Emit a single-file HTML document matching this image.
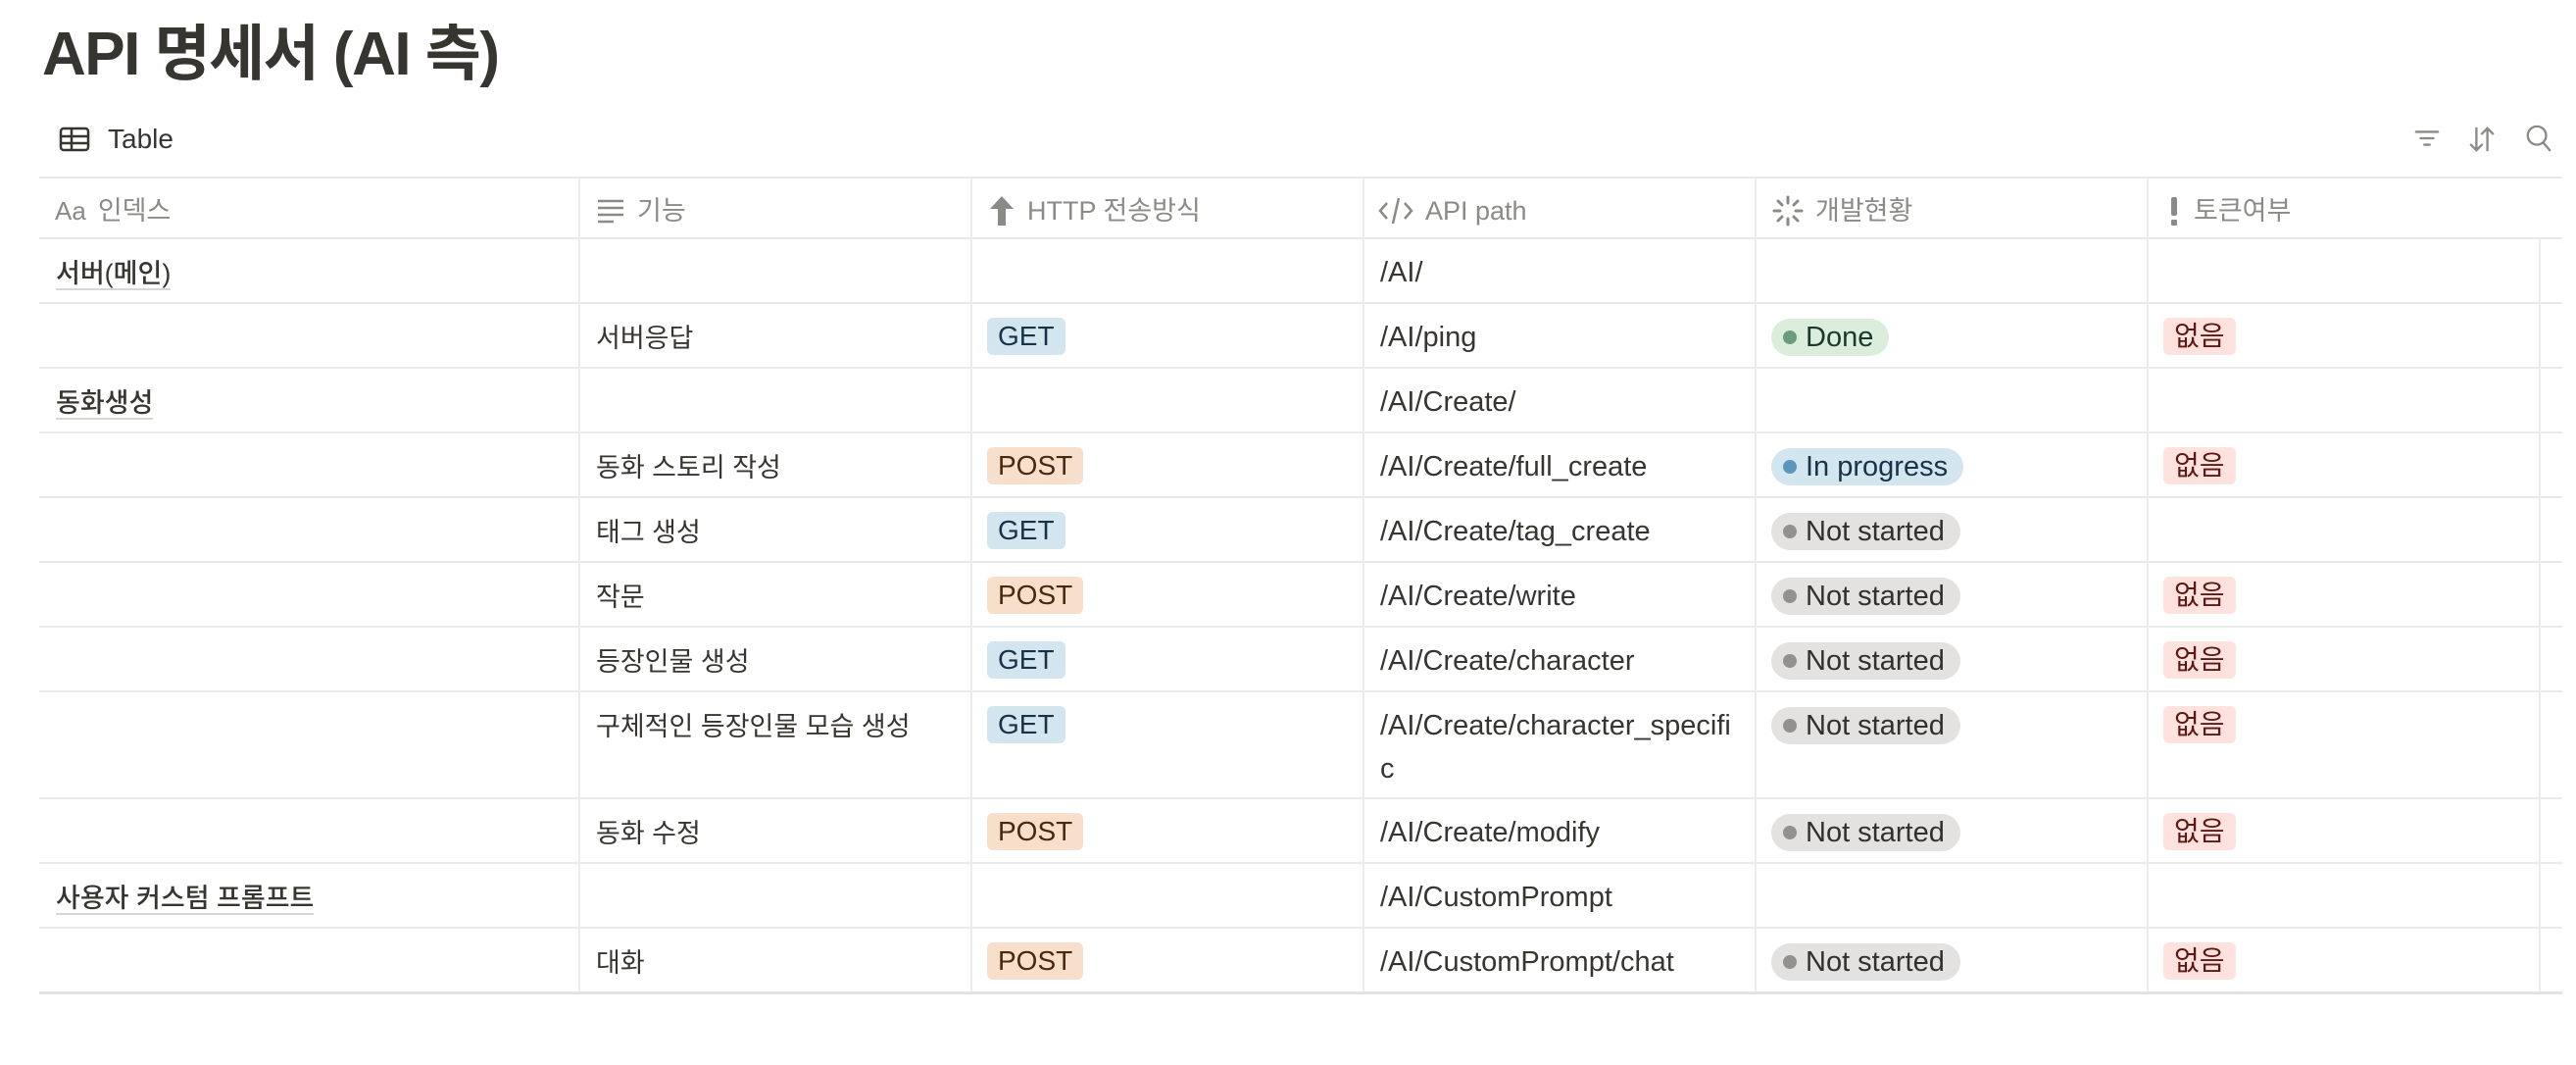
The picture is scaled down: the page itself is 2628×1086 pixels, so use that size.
<!DOCTYPE html>
<html><head><meta charset="utf-8"><style>
*{box-sizing:border-box;margin:0;padding:0}
body{width:2628px;height:1086px;background:#fff;font-family:"Liberation Sans","Noto Sans CJK KR",sans-serif;color:#37352f;position:relative;overflow:hidden}
.title{position:absolute;left:43px;top:4px;font-size:62px;font-weight:700;letter-spacing:-1.5px}
.tb{position:absolute;left:60px;top:126px;font-size:28px;font-weight:500;display:flex;align-items:center;gap:18px}
.tools{position:absolute;top:126px;}
.hline{position:absolute;left:40px;width:2574px;height:2px;background:#e9e9e7}
.vline{position:absolute;width:2px;background:#ececea}
.cell{position:absolute;font-size:27px;line-height:40px;white-space:nowrap}
.lat{font-size:29px}
.hd{position:absolute;top:193px;font-size:27px;color:#8b8a86;display:flex;align-items:center;gap:12px;line-height:44px}
.pill{display:inline-block;height:38px;line-height:38px;padding:0 11px;border-radius:6px;font-size:28px}
.get{background:#d3e5ef;color:#183347}
.post{background:#f8dfcc;color:#49290e}
.no{background:#ffe2dd;color:#5d1715}
.st{display:inline-flex;align-items:center;height:38px;padding:0 16px 0 12px;border-radius:19px;font-size:29px;gap:9px}
.st i{width:14px;height:14px;border-radius:50%;display:inline-block}
.done{background:#dbeddb;color:#1c3829}.done i{background:#6c9b7d}
.prog{background:#d3e5ef;color:#183347}.prog i{background:#5b97bd}
.ns{background:#e3e2e0;color:#32302c}.ns i{background:#91918e}
.u{border-bottom:2px solid #d7d6d3;font-weight:500}
</style></head><body>
<div class="title">API 명세서 (AI 측)</div>
<div class="tb"><svg width="32" height="28" viewBox="0 0 32 28"><rect x="2" y="3" width="28" height="22" rx="3" fill="none" stroke="#37352f" stroke-width="2.5"/><line x1="2" y1="11" x2="30" y2="11" stroke="#37352f" stroke-width="2.5"/><line x1="2" y1="18" x2="30" y2="18" stroke="#37352f" stroke-width="2.5"/><line x1="13" y1="3" x2="13" y2="25" stroke="#37352f" stroke-width="2.5"/></svg>Table</div>
<svg class="tools" style="left:2462px" width="28" height="30" viewBox="0 0 30 30"><g stroke="#8b8a86" stroke-width="2.5" stroke-linecap="round"><line x1="3" y1="8" x2="27" y2="8"/><line x1="8" y1="15" x2="22" y2="15"/><line x1="12" y1="22" x2="18" y2="22"/></g></svg>
<svg class="tools" style="left:2518px" width="28" height="32" viewBox="0 0 30 32"><g stroke="#8b8a86" stroke-width="2.5" fill="none" stroke-linecap="round"><path d="M9 4v24M3 22l6 6 6-6"/><path d="M21 28V4M15 10l6-6 6 6"/></g></svg>
<svg class="tools" style="left:2576px" width="28" height="30" viewBox="0 0 30 32"><g stroke="#8b8a86" stroke-width="2.5" fill="none"><circle cx="13" cy="13" r="10"/><line x1="20" y1="21" x2="27" y2="29" stroke-linecap="round"/></g></svg>

<div class="hline" style="top:180px"></div>
<div class="hline" style="top:242px"></div>
<div class="hline" style="top:308px"></div>
<div class="hline" style="top:374px"></div>
<div class="hline" style="top:440px"></div>
<div class="hline" style="top:506px"></div>
<div class="hline" style="top:572px"></div>
<div class="hline" style="top:638px"></div>
<div class="hline" style="top:704px"></div>
<div class="hline" style="top:813px"></div>
<div class="hline" style="top:879px"></div>
<div class="hline" style="top:945px"></div>
<div class="hline" style="top:1011px;height:3px;background:#e3e3e1"></div>
<div class="vline" style="left:590px;top:181px;height:831px"></div>
<div class="vline" style="left:990px;top:181px;height:831px"></div>
<div class="vline" style="left:1390px;top:181px;height:831px"></div>
<div class="vline" style="left:1790px;top:181px;height:831px"></div>
<div class="vline" style="left:2190px;top:181px;height:831px"></div>
<div class="vline" style="left:2590px;top:243px;height:769px"></div>

<div class="hd" style="left:56px"><span style="font-size:26px">Aa</span>인덱스</div>
<div class="hd" style="left:608px"><svg width="30" height="26" viewBox="0 0 30 26"><g stroke="#8b8a86" stroke-width="2.5"><line x1="2" y1="3" x2="28" y2="3"/><line x1="2" y1="10" x2="28" y2="10"/><line x1="2" y1="17" x2="28" y2="17"/><line x1="2" y1="24" x2="18" y2="24"/></g></svg>기능</div>
<div class="hd" style="left:1008px"><svg width="28" height="32" viewBox="0 0 28 32"><path d="M14 1L26 14H18V31H10V14H2Z" fill="#8b8a86"/></svg>HTTP 전송방식</div>
<div class="hd" style="left:1406px"><svg width="36" height="30" viewBox="0 0 36 30"><g stroke="#8b8a86" stroke-width="2.5" fill="none"><path d="M9 7L2 15l7 8M27 7l7 8-7 8M21 2L15 28"/></g></svg>API path</div>
<div class="hd" style="left:1808px"><svg width="32" height="32" viewBox="0 0 32 32"><g stroke="#8b8a86" stroke-width="3" stroke-linecap="round"><line x1="16" y1="2" x2="16" y2="8"/><line x1="16" y1="24" x2="16" y2="30"/><line x1="2" y1="16" x2="8" y2="16"/><line x1="24" y1="16" x2="30" y2="16"/><line x1="6" y1="6" x2="10" y2="10"/><line x1="22" y1="22" x2="26" y2="26"/><line x1="26" y1="6" x2="22" y2="10"/><line x1="6" y1="26" x2="10" y2="22"/></g></svg>개발현황</div>
<div class="hd" style="left:2210px"><svg width="16" height="32" viewBox="0 0 16 32"><rect x="5" y="2" width="6" height="19" rx="2" fill="#8b8a86"/><rect x="5" y="25" width="6" height="6" rx="1" fill="#8b8a86"/></svg>토큰여부</div>

<div class="cell" style="left:57px;top:259px"><span class="u">서버(메인)</span></div>
<div class="cell lat" style="left:1408px;top:258px">/AI/</div>

<div class="cell" style="left:608px;top:325px">서버응답</div>
<div class="cell" style="left:1007px;top:323px"><span class="pill get">GET</span></div>
<div class="cell lat" style="left:1408px;top:324px">/AI/ping</div>
<div class="cell" style="left:1807px;top:322px"><span class="st done"><i></i>Done</span></div>
<div class="cell" style="left:2207px;top:323px"><span class="pill no">없음</span></div>

<div class="cell" style="left:57px;top:391px"><span class="u">동화생성</span></div>
<div class="cell lat" style="left:1408px;top:390px">/AI/Create/</div>

<div class="cell" style="left:608px;top:457px">동화 스토리 작성</div>
<div class="cell" style="left:1007px;top:455px"><span class="pill post">POST</span></div>
<div class="cell lat" style="left:1408px;top:456px">/AI/Create/full_create</div>
<div class="cell" style="left:1807px;top:454px"><span class="st prog"><i></i>In progress</span></div>
<div class="cell" style="left:2207px;top:455px"><span class="pill no">없음</span></div>

<div class="cell" style="left:608px;top:523px">태그 생성</div>
<div class="cell" style="left:1007px;top:521px"><span class="pill get">GET</span></div>
<div class="cell lat" style="left:1408px;top:522px">/AI/Create/tag_create</div>
<div class="cell" style="left:1807px;top:520px"><span class="st ns"><i></i>Not started</span></div>

<div class="cell" style="left:608px;top:589px">작문</div>
<div class="cell" style="left:1007px;top:587px"><span class="pill post">POST</span></div>
<div class="cell lat" style="left:1408px;top:588px">/AI/Create/write</div>
<div class="cell" style="left:1807px;top:586px"><span class="st ns"><i></i>Not started</span></div>
<div class="cell" style="left:2207px;top:587px"><span class="pill no">없음</span></div>

<div class="cell" style="left:608px;top:655px">등장인물 생성</div>
<div class="cell" style="left:1007px;top:653px"><span class="pill get">GET</span></div>
<div class="cell lat" style="left:1408px;top:654px">/AI/Create/character</div>
<div class="cell" style="left:1807px;top:652px"><span class="st ns"><i></i>Not started</span></div>
<div class="cell" style="left:2207px;top:653px"><span class="pill no">없음</span></div>

<div class="cell" style="left:608px;top:721px">구체적인 등장인물 모습 생성</div>
<div class="cell" style="left:1007px;top:719px"><span class="pill get">GET</span></div>
<div class="cell lat" style="left:1408px;top:718px;line-height:44px">/AI/Create/character_specifi<br>c</div>
<div class="cell" style="left:1807px;top:718px"><span class="st ns"><i></i>Not started</span></div>
<div class="cell" style="left:2207px;top:719px"><span class="pill no">없음</span></div>

<div class="cell" style="left:608px;top:830px">동화 수정</div>
<div class="cell" style="left:1007px;top:828px"><span class="pill post">POST</span></div>
<div class="cell lat" style="left:1408px;top:829px">/AI/Create/modify</div>
<div class="cell" style="left:1807px;top:827px"><span class="st ns"><i></i>Not started</span></div>
<div class="cell" style="left:2207px;top:828px"><span class="pill no">없음</span></div>

<div class="cell" style="left:57px;top:896px"><span class="u">사용자 커스텀 프롬프트</span></div>
<div class="cell lat" style="left:1408px;top:895px">/AI/CustomPrompt</div>

<div class="cell" style="left:608px;top:962px">대화</div>
<div class="cell" style="left:1007px;top:960px"><span class="pill post">POST</span></div>
<div class="cell lat" style="left:1408px;top:961px">/AI/CustomPrompt/chat</div>
<div class="cell" style="left:1807px;top:959px"><span class="st ns"><i></i>Not started</span></div>
<div class="cell" style="left:2207px;top:960px"><span class="pill no">없음</span></div>
</body></html>
